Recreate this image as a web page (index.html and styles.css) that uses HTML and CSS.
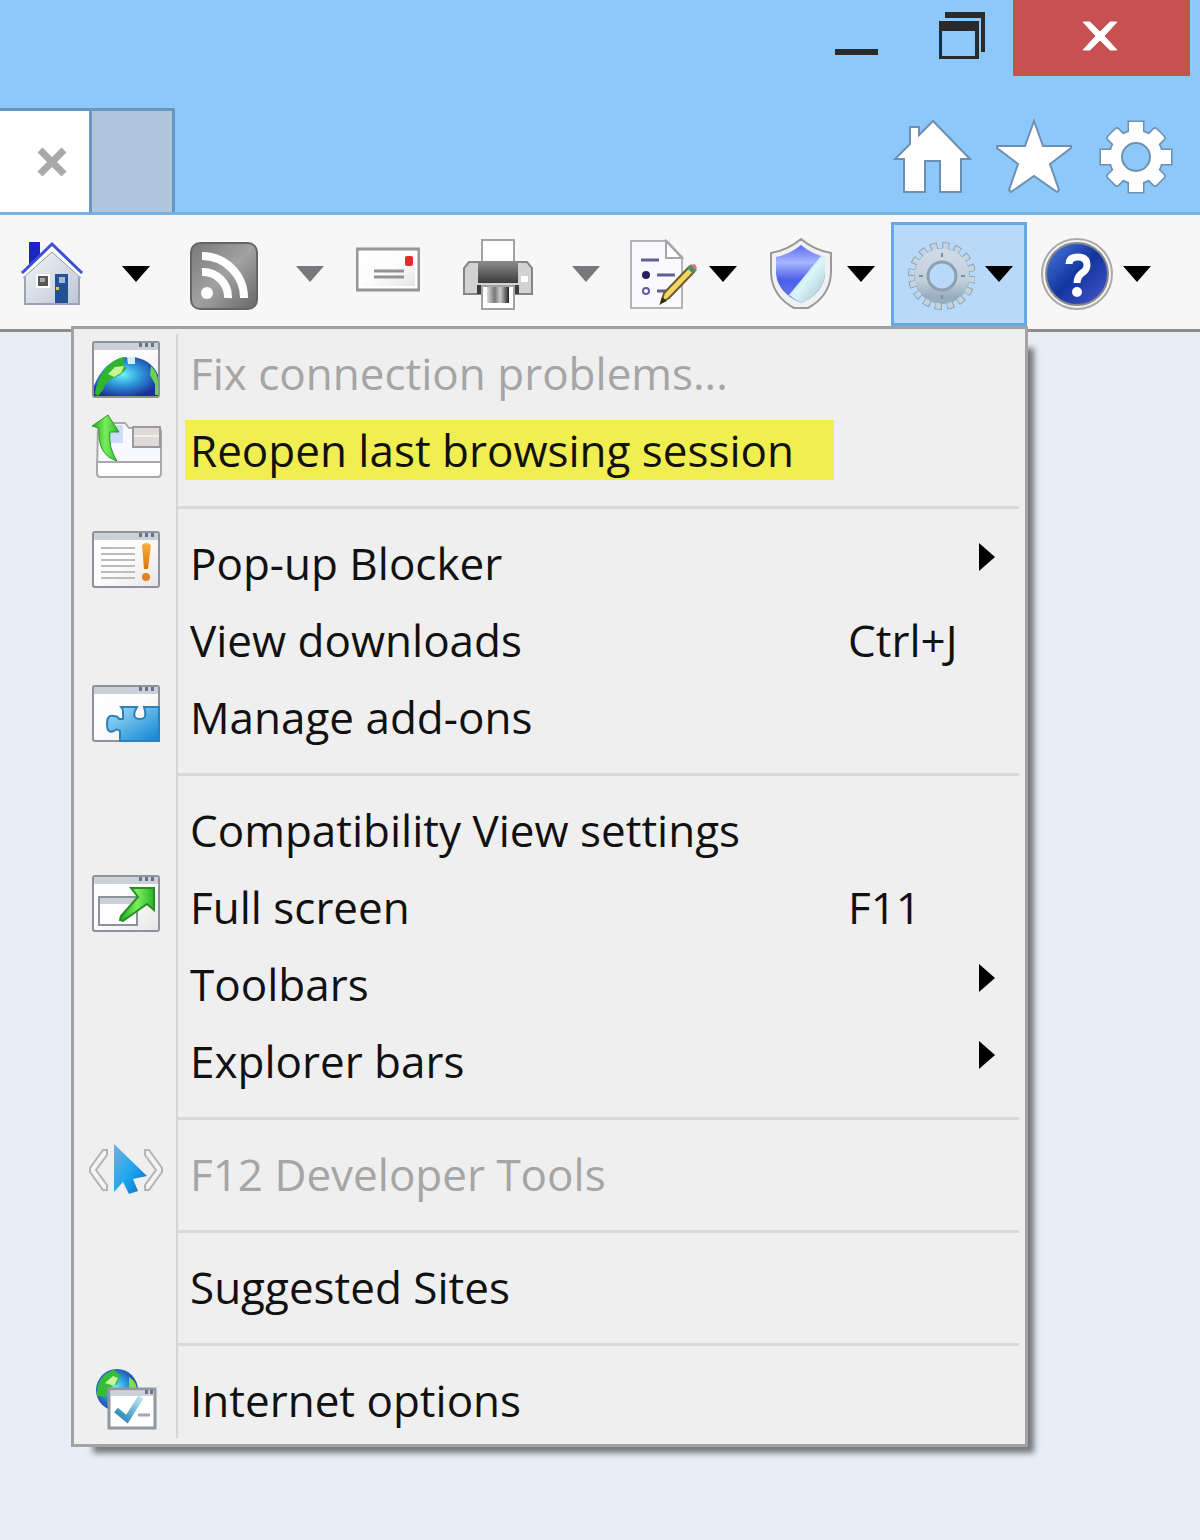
FILE: index.html
```html
<!DOCTYPE html>
<html lang="en">
<head>
    <meta charset="UTF-8">
    <meta name="viewport" content="width=device-width, initial-scale=1.0">
    <title>Browser Tools Menu</title>
    <link rel="stylesheet" href="styles.css">
</head>
<body>
    <!-- Shared gradients and shapes -->
    <svg class="defs" width="0" height="0" aria-hidden="true">
        <defs>
            <linearGradient id="wall" x1="0" y1="0" x2="1" y2="1"><stop offset="0" stop-color="#f4f7fa"/><stop offset="1" stop-color="#bdc6d6"/></linearGradient>
            <linearGradient id="grey" x1="0" y1="0" x2="1" y2="1"><stop offset="0" stop-color="#777"/><stop offset=".5" stop-color="#a2a2a2"/><stop offset="1" stop-color="#666"/></linearGradient>
            <linearGradient id="paper" x1="0" y1="0" x2="1" y2="1"><stop offset="0" stop-color="#fff"/><stop offset=".5" stop-color="#fcfcfc"/><stop offset="1" stop-color="#e6e6e8"/></linearGradient>
            <linearGradient id="dark" x1="0" y1="0" x2="0" y2="1"><stop offset="0" stop-color="#898989"/><stop offset="1" stop-color="#3c3c3c"/></linearGradient>
            <linearGradient id="ink" x1="0" y1="0" x2="1" y2="0"><stop offset="0" stop-color="#ddd"/><stop offset=".35" stop-color="#777"/><stop offset=".6" stop-color="#ccc"/><stop offset="1" stop-color="#222"/></linearGradient>
            <linearGradient id="steel" x1="0" y1="0" x2="0" y2="1"><stop offset="0" stop-color="#cddae5"/><stop offset=".6" stop-color="#c3d0dc"/><stop offset="1" stop-color="#98adc0"/></linearGradient>
            <linearGradient id="shieldBlue" x1="0" y1="0" x2="0" y2="1"><stop offset="0" stop-color="#5a6df0"/><stop offset=".3" stop-color="#a9b5ff"/><stop offset=".6" stop-color="#4b5fe8"/><stop offset="1" stop-color="#6b7df0"/></linearGradient>
            <linearGradient id="shieldPale" x1="0" y1="0" x2="1" y2="1"><stop offset="0" stop-color="#9bb9c4"/><stop offset=".5" stop-color="#dcf6fa"/><stop offset="1" stop-color="#9fbccc"/></linearGradient>
            <linearGradient id="helpBlue" x1="0" y1="0" x2="1" y2="1"><stop offset="0" stop-color="#4a7be0"/><stop offset=".5" stop-color="#12359d"/><stop offset="1" stop-color="#4a58d4"/></linearGradient>
            <linearGradient id="puzzle" x1="0" y1="0" x2="1" y2="1"><stop offset="0" stop-color="#a5e0fb"/><stop offset="1" stop-color="#0e83d2"/></linearGradient>
            <linearGradient id="cursor" x1="0" y1="0" x2="1" y2="1"><stop offset="0" stop-color="#76aeda"/><stop offset=".5" stop-color="#22a9ef"/><stop offset="1" stop-color="#0c62c0"/></linearGradient>
            <linearGradient id="tick" x1="0" y1="1" x2="1" y2="0"><stop offset="0" stop-color="#1c7fb4"/><stop offset="1" stop-color="#bfe6f2"/></linearGradient>
            <linearGradient id="green" x1="0" y1="0" x2="1" y2="0"><stop offset="0" stop-color="#1ea51e"/><stop offset=".5" stop-color="#79ee5c"/><stop offset="1" stop-color="#2bb32b"/></linearGradient>
            <linearGradient id="orange" x1="0" y1="0" x2="0" y2="1"><stop offset="0" stop-color="#f8b13c"/><stop offset="1" stop-color="#dc7413"/></linearGradient>
            <radialGradient id="globe" cx=".45" cy=".45" r=".6"><stop offset="0" stop-color="#6df2fb"/><stop offset=".45" stop-color="#2f9bdc"/><stop offset="1" stop-color="#1c2f9c"/></radialGradient>
            <g id="window">
                <rect x="5" y="6" width="66" height="55" rx="2" fill="url(#paper)" stroke="#8e9299" stroke-width="2"/>
                <path d="M6 7h64v7H6z" fill="#ccd1d8"/>
                <path d="M51 7h3v4h-3zM57 7h3v4h-3zM63 7h3v4h-3z" fill="#657592"/>
            </g>
            <g id="gearShape">
                <circle cx="40" cy="40" r="26"/>
                <rect x="33" y="5" width="14" height="70"/><rect x="5" y="33" width="70" height="14"/>
                <g transform="rotate(45 40 40)"><rect x="33" y="6" width="14" height="68" rx="2"/><rect x="6" y="33" width="68" height="14" rx="2"/></g>
            </g>
        </defs>
    </svg>

    <header class="frame">
        <div class="window-controls">
            <button class="control" aria-label="Minimize">
                <svg width="48" height="76" viewBox="0 0 48 76"><path d="M3 49h43v6H3z" fill="#2a2a2a"/></svg>
            </button>
            <button class="control" aria-label="Restore">
                <svg width="48" height="76" viewBox="0 0 48 76">
                    <path d="M7 12h40v40h-4V18H7z" fill="#2a2a2a"/>
                    <path fill-rule="evenodd" d="M1 21h40v38H1zM4 31v25h33V31z" fill="#2a2a2a"/>
                </svg>
            </button>
            <button class="control close" aria-label="Close">
                <svg width="36" height="30" viewBox="0 0 36 30"><path d="M1 1h7l10 10L28 1h7L22 15l13 14h-7L18 19 8 29H1l13-14z" fill="#fff" stroke="#fff"/></svg>
            </button>
        </div>
        <div class="tab-row">
            <div class="tabs">
                <div class="tab active">
                    <button class="tab-close" aria-label="Close tab">
                        <svg width="32" height="32" viewBox="0 0 32 32"><path d="M4 4l24 24M28 4L4 28" stroke="#aaa8a9" stroke-width="7"/></svg>
                    </button>
                </div>
                <button class="tab new" aria-label="New tab"></button>
            </div>
            <nav class="quick">
                <button aria-label="Home">
                    <svg width="80" height="80" viewBox="0 0 80 80"><path d="M41 4L27 18V10h-9v17L3 42h9v33h21V44h15v31h21V42h9z" fill="#fff" stroke="#6d90b0" stroke-width="2"/></svg>
                </button>
                <button aria-label="Favorites">
                    <svg width="80" height="80" viewBox="0 0 80 80"><path d="M40 4l9 25h28v2L56 47l9 26-2 2-23-16-23 16-2-2 9-26L3 31v-2h28z" fill="#fff" stroke="#6d90b0" stroke-width="2"/></svg>
                </button>
                <button aria-label="Tools">
                    <svg width="80" height="80" viewBox="0 0 80 80">
                        <use href="#gearShape" fill="#6d90b0" stroke="#6d90b0" stroke-width="3"/>
                        <use href="#gearShape" fill="#fff"/>
                        <circle cx="40" cy="40" r="14" fill="#8dc8fb" stroke="#6d90b0" stroke-width="2"/>
                    </svg>
                </button>
            </nav>
        </div>
    </header>

    <div class="command-bar">
        <div class="split">
            <button aria-label="Home page">
                <svg width="64" height="72" viewBox="0 0 64 72">
                    <path d="M9 4h11v14L9 29z" fill="#1c25c4"/>
                    <path d="M5 35L32 11l27 24v31H5z" fill="url(#wall)" stroke="#9aa4b5" stroke-width="2"/>
                    <path d="M3 38L32 11l29 27" fill="none" stroke="#fff" stroke-width="4"/>
                    <path d="M3 40L32 14l29 26" fill="none" stroke="#8f9499" stroke-width="1"/>
                    <path d="M2 35L32 6l30 29" fill="none" stroke="#3c50d6" stroke-width="3"/>
                    <path d="M17 37h12v12H17z" fill="#555" stroke="#fff" stroke-width="2"/><path d="M20 40h5v4h-5z" fill="#aaa"/>
                    <path d="M35 36h13v29H35z" fill="#235196"/><path d="M39 39h6v6h-6z" fill="#9db8d8"/><path d="M36 49h3v3h-3z" fill="#e8c63a"/>
                </svg>
            </button>
            <button class="drop" aria-label="Home options"><svg width="28" height="16" viewBox="0 0 28 16"><path d="M0 0h28L14 16z"/></svg></button>
        </div>
        <div class="split feeds">
            <button aria-label="Feeds">
                <svg width="68" height="72" viewBox="0 0 68 72">
                    <rect x="1" y="5" width="66" height="66" rx="9" fill="url(#grey)" stroke="#666" stroke-width="2"/>
                    <circle cx="17" cy="55" r="6" fill="#fff"/>
                    <path d="M12 34a25 25 0 0 1 26 26M12 18a42 42 0 0 1 42 42" fill="none" stroke="#fff" stroke-width="8"/>
                </svg>
            </button>
            <button class="drop muted" aria-label="Feed options"><svg width="28" height="16" viewBox="0 0 28 16"><path d="M0 0h28L14 16z"/></svg></button>
        </div>
        <button class="mail" aria-label="Read mail">
            <svg width="64" height="72" viewBox="0 0 64 72">
                <rect x="1" y="11" width="62" height="41" fill="#fff" stroke="#969696" stroke-width="3"/>
                <rect x="5" y="15" width="54" height="33" fill="url(#paper)"/>
                <rect x="49" y="18" width="8" height="10" rx="2" fill="#e82a2a"/>
                <path d="M18 33h30M18 39h30" stroke="#929292" stroke-width="3"/>
            </svg>
        </button>
        <div class="split print">
            <button aria-label="Print">
                <svg width="72" height="72" viewBox="0 0 72 72">
                    <rect x="20" y="2" width="32" height="30" fill="#fff" stroke="#a2a2a2" stroke-width="2"/>
                    <path d="M7 24h58l5 6v26H2V30z" fill="#d2d2d2" stroke="#858585" stroke-width="2"/>
                    <path d="M16 24h40v21H16z" fill="url(#dark)"/>
                    <path d="M15 47h42v9H15z" fill="#3c3c3c"/>
                    <path d="M59 38h7v6h-7z" fill="#fff"/>
                    <rect x="20" y="48" width="32" height="23" fill="#fff" stroke="#a2a2a2" stroke-width="2"/>
                    <path d="M25 49h22v16H25z" fill="url(#ink)"/>
                </svg>
            </button>
            <button class="drop muted" aria-label="Print options"><svg width="28" height="16" viewBox="0 0 28 16"><path d="M0 0h28L14 16z"/></svg></button>
        </div>
        <button class="tool first" aria-label="Page">
            <svg width="72" height="72" viewBox="0 0 72 72">
                <path d="M4 3h36l15 16v51H4z" fill="#fafafc" stroke="#b5b5b8" stroke-width="2"/>
                <path d="M39 3v17h16z" fill="#fff" stroke="#a5a5a5" stroke-width="2"/>
                <path d="M14 22h18M30 37h18M30 53h14" stroke="#625e99" stroke-width="3"/>
                <circle cx="19" cy="37" r="4" fill="#25205f"/><circle cx="19" cy="53" r="3" fill="#fff" stroke="#625e99" stroke-width="2"/>
                <path d="M34 65l3-10 25-26 5 5-25 26z" fill="#eed862" stroke="#6e5930" stroke-width="2"/>
                <path d="M60 30l4-4 6 6-4 4z" fill="#4f8f66"/><path d="M64 27l4-1 2 4-2 2z" fill="#d77"/><path d="M33 66l2-7 5 4z" fill="#3a2c18"/>
            </svg>
            <svg class="arrow" width="28" height="16" viewBox="0 0 28 16"><path d="M0 0h28L14 16z"/></svg>
        </button>
        <button class="tool" aria-label="Safety">
            <svg width="72" height="72" viewBox="0 0 72 72">
                <path d="M36 1Q49 12 66 15v20Q65 58 43 70H29Q7 58 6 35V15Q23 12 36 1z" fill="#f1f1f1" stroke="#999" stroke-width="2"/>
                <path d="M36 7Q47 16 60 19v17Q58 56 36 65Q13 55 11 36V19Q25 16 36 7z" fill="url(#shieldBlue)"/>
                <path d="M56 18l4 1v17Q58 56 36 65 29 61 24 57z" fill="url(#shieldPale)"/>
            </svg>
            <svg class="arrow" width="28" height="16" viewBox="0 0 28 16"><path d="M0 0h28L14 16z"/></svg>
        </button>
        <button class="tool open" aria-label="Tools" aria-expanded="true">
            <svg width="72" height="72" viewBox="0 0 72 72">
                <circle cx="39" cy="38" r="28" fill="#8fa3b5"/>
                <circle cx="39" cy="38" r="30" fill="none" stroke="#8fa3b5" stroke-width="8" stroke-dasharray="7 4.78"/>
                <circle cx="39" cy="38" r="29" fill="none" stroke="#c6d4df" stroke-width="8" stroke-dasharray="5 6.39" stroke-dashoffset="-1"/>
                <circle cx="39" cy="38" r="21" fill="none" stroke="url(#steel)" stroke-width="13"/>
                <circle cx="39" cy="38" r="14" fill="#b8d9f8" stroke="#8da0b2" stroke-width="3"/>
                <path d="M38 15h2v4h-2zM38 57h2v4h-2zM16 37h4v2h-4zM58 37h4v2h-4z" fill="#7b90a3"/>
            </svg>
            <svg class="arrow" width="28" height="16" viewBox="0 0 28 16"><path d="M0 0h28L14 16z"/></svg>
        </button>
        <button class="tool" aria-label="Help">
            <svg width="72" height="72" viewBox="0 0 72 72">
                <circle cx="36" cy="36" r="35" fill="#f4f4f4" stroke="#aaa" stroke-width="2"/>
                <circle cx="36" cy="36" r="31" fill="url(#helpBlue)" stroke="#888" stroke-width="2"/>
                <path d="M28 26q0-7 9-7 9 0 9 8 0 5-5 8-5 4-5 10" fill="none" stroke="#fff" stroke-width="7"/>
                <circle cx="36" cy="54" r="5" fill="#fff"/>
            </svg>
            <svg class="arrow" width="28" height="16" viewBox="0 0 28 16"><path d="M0 0h28L14 16z"/></svg>
        </button>
    </div>

    <main class="page">
        <div class="menu">
            <ul class="menu-list">
                <li><button class="item" disabled>
                    <span class="icon"><svg width="76" height="68" viewBox="0 0 76 68">
                        <use href="#window"/>
                        <path d="M6 60V50C12 34 24 21 42 21c14 0 24 8 28 18v21z" fill="url(#globe)"/>
                        <path d="M7 58C9 38 24 22 37 21l-2 7 3 5-6 6-9 4-6 6-2 5-5 6z" fill="#2fb62c"/>
                        <path d="M20 38l7-7 9-1-3 7-7 4z" fill="#c9f598"/>
                        <path d="M39 21h8v7h-7z" fill="#d5eef2"/>
                        <path d="M63 30q7 7 7 15v14h-3V48l-5-9z" fill="#6cd052"/>
                    </svg></span>
                    <span class="label">Fix connection problems...</span>
                </button></li>
                <li><button class="item">
                    <span class="icon"><svg width="76" height="68" viewBox="0 0 76 68">
                        <path d="M10 10h27l4 5h28q4 0 4 4v41q0 4-4 4H13q-4 0-4-4z" fill="#f7f9ff" stroke="#aaa" stroke-width="2"/>
                        <path d="M21 12h14v18H21z" fill="#cfdcf8"/>
                        <path d="M45 14h27v20H45z" fill="#dddad9" stroke="#999" stroke-width="2"/><path d="M46 23h25" stroke="#f2f0ef" stroke-width="2"/>
                        <path d="M9 49h64v11q0 4-4 4H13q-4 0-4-4z" fill="#fff" stroke="#aaa" stroke-width="2"/>
                        <path d="M4 13L20 2l11 17h-9q-2 15 7 29Q9 42 11 15z" fill="url(#green)" stroke="#2b9a2b" stroke-width="1"/>
                    </svg></span>
                    <span class="label"><mark>Reopen last browsing session</mark></span>
                </button></li>
                <li class="separator"></li>
                <li><button class="item">
                    <span class="icon"><svg width="76" height="68" viewBox="0 0 76 68">
                        <use href="#window"/>
                        <path d="M13 22h34M13 28h34M13 34h34M13 40h34M13 46h34M13 52h34" stroke="#bcbcbc" stroke-width="2"/>
                        <path d="M54 19q4-4 9 0l-3 24h-4z" fill="url(#orange)"/><circle cx="58" cy="51" r="4" fill="#e08220"/>
                    </svg></span>
                    <span class="label">Pop-up Blocker</span>
                    <span class="extra"><svg class="submenu" width="16" height="28" viewBox="0 0 16 28"><path d="M0 0v28l16-14z"/></svg></span>
                </button></li>
                <li><button class="item">
                    <span class="icon"></span>
                    <span class="label">View downloads</span>
                    <span class="extra">Ctrl+J</span>
                </button></li>
                <li><button class="item">
                    <span class="icon"><svg width="76" height="68" viewBox="0 0 76 68">
                        <use href="#window"/>
                        <path d="M32 61V51q-3-3-6 0-7 3-7-7t7-8q4 0 5 3h4v-9l-2-3h16l-2 4q-3 8 5 8 7 0 5-8l-1-4h15v34z" fill="url(#puzzle)" stroke="#2f80b8" stroke-width="2"/>
                    </svg></span>
                    <span class="label">Manage add-ons</span>
                </button></li>
                <li class="separator"></li>
                <li><button class="item">
                    <span class="icon"></span>
                    <span class="label">Compatibility View settings</span>
                </button></li>
                <li><button class="item">
                    <span class="icon"><svg width="76" height="68" viewBox="0 0 76 68">
                        <use href="#window"/>
                        <path d="M11 27h38v28H11z" fill="#fff" stroke="#8e9299" stroke-width="2"/><path d="M12 28h36v6H12z" fill="#ccd1d8"/>
                        <path d="M43 18h23v22l-7-6-24 17-3-1 1-4 17-19z" fill="url(#green)" stroke="#238f25" stroke-width="2"/>
                    </svg></span>
                    <span class="label">Full screen</span>
                    <span class="extra">F11</span>
                </button></li>
                <li><button class="item">
                    <span class="icon"></span>
                    <span class="label">Toolbars</span>
                    <span class="extra"><svg class="submenu" width="16" height="28" viewBox="0 0 16 28"><path d="M0 0v28l16-14z"/></svg></span>
                </button></li>
                <li><button class="item">
                    <span class="icon"></span>
                    <span class="label">Explorer bars</span>
                    <span class="extra"><svg class="submenu" width="16" height="28" viewBox="0 0 16 28"><path d="M0 0v28l16-14z"/></svg></span>
                </button></li>
                <li class="separator"></li>
                <li><button class="item" disabled>
                    <span class="icon"><svg width="76" height="68" viewBox="0 0 76 68">
                        <path d="M15 13h4v5L8 33l11 15v5h-4L2 35v-4zM61 13h-4v5l11 15-11 15v5h4l13-18v-4z" fill="#f4f4f4" stroke="#b4b4b4" stroke-width="2"/>
                        <path d="M26 7l33 32-14 3 5 12-9 3-6-12-9 10z" fill="url(#cursor)"/>
                    </svg></span>
                    <span class="label">F12 Developer Tools</span>
                </button></li>
                <li class="separator"></li>
                <li><button class="item">
                    <span class="icon"></span>
                    <span class="label">Suggested Sites</span>
                </button></li>
                <li class="separator"></li>
                <li><button class="item">
                    <span class="icon"><svg width="76" height="68" viewBox="0 0 76 68">
                        <circle cx="29" cy="27" r="21" fill="url(#globe)"/>
                        <path d="M9 33Q8 13 26 7l6 5-3 9-8 4-4 9z" fill="#35bd35"/><path d="M17 20l8-7 5 2-4 8z" fill="#c9f598"/>
                        <path d="M41 14q8 5 8 13h-8z" fill="#7fe045"/>
                        <path d="M21 26h46v39H21z" fill="#fff" stroke="#92969d" stroke-width="3"/>
                        <path d="M23 28h42v5H23z" fill="#ccd1d8"/><path d="M57 27h3v4h-3zM62 27h3v4h-3z" fill="#657592"/>
                        <path d="M28 47l11 9 14-22" fill="none" stroke="url(#tick)" stroke-width="6"/>
                        <path d="M50 52h12" stroke="#a9a2bb" stroke-width="3"/>
                    </svg></span>
                    <span class="label">Internet options</span>
                </button></li>
            </ul>
        </div>
    </main>
</body>
</html>
```

FILE: styles.css
```css
* {
    box-sizing: border-box;
}
body {
    margin: 0;
    min-height: 100vh;
    background-color: #e8edf6;
    font-family: "Open Sans", "Noto Sans", sans-serif;
    color: #111;
}
button {
    padding: 0;
    border: none;
    background: none;
    font: inherit;
    color: inherit;
}
svg {
    display: block;
}
.defs {
    position: absolute;
}

/* Window frame */
.frame {
    background-color: #8dc8fb;
    border-bottom: 3px solid #79b0e2;
}
.window-controls {
    display: flex;
    justify-content: flex-end;
    padding-right: 10px;
}
.control {
    margin-right: 58px;
}
.control + .control {
    margin-right: 27px;
}
.window-controls .close {
    display: flex;
    align-items: center;
    justify-content: center;
    width: 177px;
    height: 76px;
    margin-right: 0;
    padding: 0 4px 4px 0;
    background-color: #c75050;
}
.tab-row {
    display: flex;
    justify-content: space-between;
    align-items: flex-end;
    padding-top: 32px;
}
.tabs {
    display: flex;
}
.tab {
    width: 83px;
    height: 104px;
    border-top: 3px solid #6896be;
    border-right: 3px solid #6896be;
    background-color: #afc5db;
}
.tab.active {
    display: flex;
    align-items: center;
    justify-content: flex-end;
    width: 92px;
    padding-right: 21px;
    background-color: #fff;
}
.quick {
    display: flex;
    gap: 22px;
    padding: 0 24px 15px 0;
}

/* Command bar */
.command-bar {
    display: flex;
    align-items: center;
    padding: 7px 0 3px 20px;
    background-color: #f7f7f7;
    border-bottom: 3px solid #8c8c8c;
}
.split {
    display: flex;
    align-items: center;
    gap: 38px;
}
.feeds {
    margin-left: 40px;
}
.mail {
    margin-left: 32px;
}
.print {
    margin-left: 42px;
}
.muted {
    fill: #77787b;
}
.tool {
    display: flex;
    align-items: center;
    gap: 10px;
    width: 138px;
    height: 104px;
    padding-left: 12px;
}
.tool.first {
    margin-left: 15px;
}
.tool.open {
    width: 136px;
    margin-right: 2px;
    background-color: #b8d9f8;
    box-shadow: inset 0 0 0 3px #69a8e8;
}

/* Tools menu */
.page {
    padding: 0 172px 90px 71px;
}
.menu {
    position: relative;
    margin-top: -6px;
    padding: 5px 0 6px;
    background-color: #efefef;
    border: 3px solid #a3a3a3;
    box-shadow: 14px 14px 6px -8px #74787b;
}
.menu-list {
    margin: 0;
    padding: 0;
    list-style: none;
    background: linear-gradient(#d6d6d6, #d6d6d6) 102px 0 / 2px 100% no-repeat;
}
.item {
    display: grid;
    grid-template-columns: 104px 1fr 177px;
    align-items: center;
    width: 100%;
    height: 77px;
    font-size: 44px;
    line-height: 60px;
    text-align: left;
    white-space: nowrap;
}
.item:disabled {
    color: #a5a5a5;
}
.icon {
    display: flex;
    justify-content: center;
    padding-bottom: 5px;
}
.label {
    padding-left: 12px;
}
.label mark {
    display: inline-block;
    margin-left: -5px;
    padding: 0 40px 0 5px;
    background-color: #f0ee50;
    color: inherit;
}
.submenu {
    margin: 0 30px 12px auto;
}
.separator {
    height: 3px;
    margin: 18px 6px 15px 104px;
    background-color: #d9d9d9;
}
```
